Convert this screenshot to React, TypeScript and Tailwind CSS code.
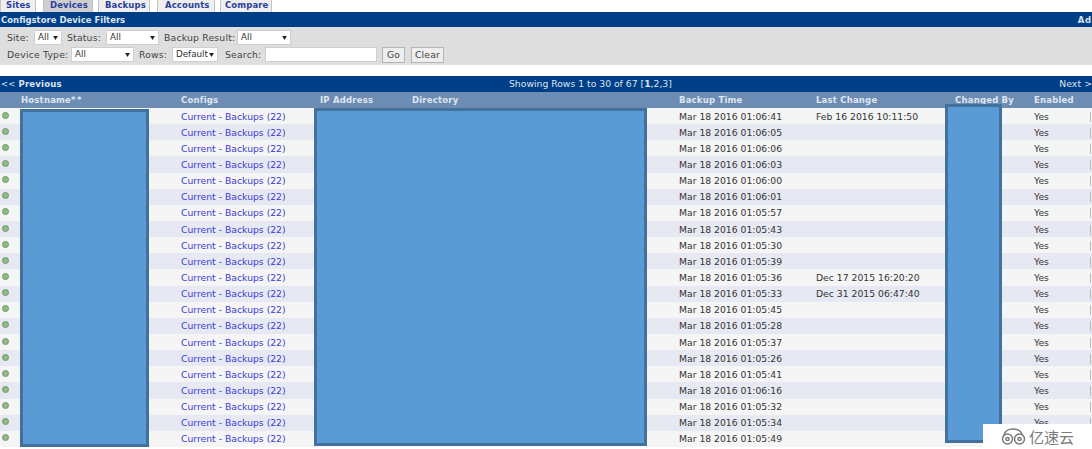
const times = ["01:06:41","01:06:05","01:06:06","01:06:03","01:06:00","01:06:01","01:05:57","01:05:43","01:05:30","01:05:39","01:05:36","01:05:33","01:05:45","01:05:28","01:05:37","01:05:26","01:05:41","01:06:16","01:05:32","01:05:34","01:05:49"];
const changes: Record<number, string> = { 0: "Feb 16 2016 10:11:50", 10: "Dec 17 2015 16:20:20", 11: "Dec 31 2015 06:47:40" };
const tabs = [
  { t: "Sites", w: "w-[36px] pl-[5px]", a: false },
  { t: "Devices", w: "w-[50px] ml-[7px] pl-[6px]", a: true },
  { t: "Backups", w: "w-[52px] ml-[5px] pl-[6px]", a: false },
  { t: "Accounts", w: "w-[58px] ml-[7px] pl-[7px]", a: false },
  { t: "Compare", w: "w-[52px] ml-[5px] pl-[4px]", a: false },
];
const cols = "grid grid-cols-[21px_160px_139px_92px_267px_137px_139px_79px_56px_1fr]";

function Sel({ v, w }: { v: string; w: string }) {
  return (
    <span className={`relative inline-flex h-[15px] items-center border border-[#cfcfcf] bg-white pl-[3px] text-[8.75px] tracking-normal text-[#333] ${w}`}>
      {v}
      <svg className="absolute right-[3px] top-[5px]" width="5" height="4" viewBox="0 0 6 5"><path d="M0 0h6L3 5z" fill="#222" /></svg>
    </span>
  );
}

function Redact({ c }: { c: string }) {
  return <div className={`absolute border-[3px] border-[#41719c] bg-[#5b9bd5] ${c}`} />;
}

export default function App() {
  return (
    <div className="relative h-[449px] w-[1092px] overflow-hidden whitespace-nowrap bg-white font-['DejaVu_Sans',sans-serif] text-[9.25px] text-[#333]">
      <div className="flex h-[12px] items-end overflow-hidden">
        {tabs.map((x) => (
          <div key={x.t} className={`flex h-[12px] items-end border-x border-[#c4c4c4] pb-[3px] text-[8.5px] font-bold leading-none tracking-[0.1px] text-[#2a3f9c] ${x.w} ${x.a ? "bg-[#cfcfcf]" : "bg-[#efefef]"}`}>
            {x.t}
          </div>
        ))}
      </div>

      <div className="flex h-[15px] items-center justify-between bg-[#003f87] pl-[1px] pt-[1px] text-[8.5px] font-bold text-[#dbe4f0]">
        <span>Configstore Device Filters</span>
        <span className="tracking-[0.8px]">Ad</span>
      </div>

      <div className="flex h-[38px] flex-col gap-[1px] bg-[#dedede] pl-[7px] pt-[3px] text-[#444]">
        <div className="flex h-[15px] items-center tracking-[0.2px]">
          <span className="w-[27px]">Site:</span><Sel v="All" w="w-[28px]" />
          <span className="ml-[5px] w-[39px]">Status:</span><Sel v="All" w="w-[53px]" />
          <span className="ml-[5px] w-[73px]">Backup Result:</span><Sel v="All" w="w-[54px]" />
        </div>
        <div className="flex h-[17px] items-center tracking-[0.2px]">
          <span className="w-[64px]">Device Type:</span><Sel v="All" w="w-[63px]" />
          <span className="ml-[5px] w-[33px]">Rows:</span><Sel v="Default" w="w-[46px]" />
          <span className="ml-[7px] w-[40px]">Search:</span>
          <div className="h-[15px] w-[112px] border border-[#cfcfcf] bg-white" />
          <div className="ml-[5px] flex h-[16px] w-[23px] items-center justify-center border border-[#b5b5b5] bg-[#eeeeee]">Go</div>
          <div className="ml-[6px] flex h-[16px] w-[33px] items-center justify-center border border-[#b5b5b5] bg-[#eeeeee]">Clear</div>
        </div>
      </div>

      <div className="h-[11px]" />

      <div className="grid h-[16px] grid-cols-[508px_1fr_auto] items-center bg-[#003f87] pl-[1px] text-[#dbe4f0]">
        <span className="text-[8.5px] tracking-[0.2px]">&lt;&lt; <b>Previous</b></span>
        <span>Showing Rows 1 to 30 of 67 [<b>1</b>,2,3]</span>
        <span className="tracking-[0.1px]">Next &gt;</span>
      </div>

      <div className={`${cols} h-[16px] items-center bg-[#6d8cb4] text-[8.5px] font-bold tracking-[0.2px] text-[#dfe6f0]`}>
        <span /><span>Hostname<span className="tracking-[1.5px]">**</span></span><span>Configs</span><span>IP Address</span><span>Directory</span>
        <span>Backup Time</span><span>Last Change</span><span>Changed By</span><span>Enabled</span><span />
      </div>

      {times.map((t, i) => (
        <div key={t + i} className={`${cols} h-[16.15px] items-center pt-[1px] ${i % 2 ? "bg-[#e7e9f2]" : "bg-[#f5f5f5]"}`}>
          <span className="ml-[2px] mb-[3px] h-[7px] w-[7px] rounded-full border border-[#6f9a68] bg-[#8fbc86]" />
          <span />
          <span className="text-[#3b3bd6]">Current - Backups (22)</span>
          <span /><span />
          <span>Mar 18 2016 {t}</span>
          <span>{changes[i] ?? ""}</span>
          <span />
          <span>{i < 20 ? "Yes" : ""}</span>
          <span className="h-[10px] border-l border-[#bbbbbb]" />
        </div>
      ))}

      <Redact c="left-[20px] top-[109px] h-[338px] w-[129px]" />
      <Redact c="left-[314px] top-[108px] h-[338px] w-[333px]" />
      <Redact c="left-[945px] top-[104px] h-[339px] w-[57px]" />

      <div className="absolute bottom-0 right-0 flex h-[25px] w-[109px] items-center gap-[3px] bg-white pl-[18px] font-['Noto_Sans_CJK_SC',sans-serif] text-[15px] leading-none text-[#7a7a7a]">
        <svg width="25" height="17" viewBox="0 0 25 17" fill="none" stroke="#7a7a7a" strokeWidth="1.5">
          <circle cx="6.5" cy="11" r="5" /><circle cx="18.5" cy="11" r="5" /><circle cx="6.5" cy="11" r="1.6" /><circle cx="18.5" cy="11" r="1.6" />
          <path d="M3 7C4 3 8 1 12 1c4 0 8 2 9.5 6" />
        </svg>
        亿速云
      </div>
    </div>
  );
}
